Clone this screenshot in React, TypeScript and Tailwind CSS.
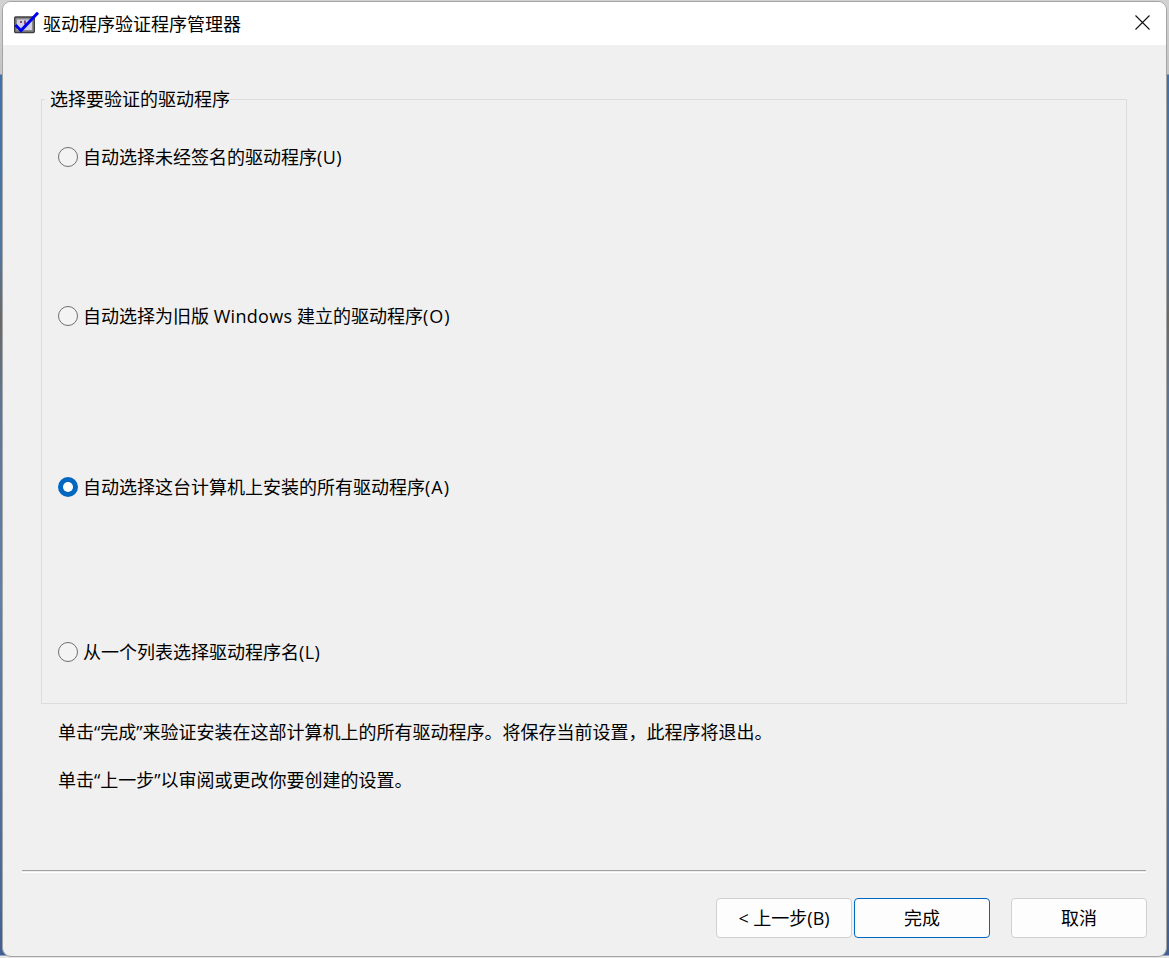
import React from "react";

const font = "font-['Open_Sans','Noto_Sans_CJK_SC',sans-serif]";

function Radio({
  label,
  suffix,
  suffixClass,
  checked,
  className,
}: {
  label: React.ReactNode;
  suffix: string;
  suffixClass?: string;
  checked?: boolean;
  className?: string;
}) {
  return (
    <div className={`flex items-center h-[24px] ${className ?? ""}`}>
      {checked ? (
        <span className="w-[20px] h-[20px] rounded-full bg-[#0067c0] flex items-center justify-center shrink-0">
          <span className="w-[10px] h-[10px] rounded-full bg-white" />
        </span>
      ) : (
        <span className="w-[20px] h-[20px] rounded-full border border-[#6e6e6e] bg-[#f3f3f3] shrink-0" />
      )}
      <span className="ml-[5px] text-[18px] leading-[24px] text-black whitespace-nowrap">
        {label}
        <span className={suffixClass ?? "tracking-[0.4px]"}>{suffix}</span>
      </span>
    </div>
  );
}

function Btn({ label, primary, className }: { label: string; primary?: boolean; className?: string }) {
  return (
    <button
      className={`w-[136px] h-[40px] rounded-[4px] bg-[#fdfdfd] border text-[18px] leading-[24px] text-black ${
        primary ? "border-[#0067c0]" : "border-[#d0d0d0]"
      } ${className ?? ""}`}
    >
      {label}
    </button>
  );
}

function AppIcon() {
  return (
    <svg width="25" height="22" viewBox="0 0 25 22" className="shrink-0 mb-[2px]">
      <rect x="0.7" y="5" width="19.6" height="15.5" rx="1" fill="#8a8a8a" stroke="#3f3f3f" strokeWidth="1.4" />
      <rect x="3" y="7.5" width="15" height="10.5" fill="#cfcfe6" />
      <path d="M6 9h2v2H6zM10 8.5h2v4h-2zM13 10h2v2h-2z" fill="#8a4a6a" />
      <path d="M1.5 13 L7 18.5 L24 0.7" fill="none" stroke="#0000f0" strokeWidth="3" />
    </svg>
  );
}

function CloseIcon() {
  return (
    <svg width="15" height="15" viewBox="0 0 15 15" className="shrink-0 mb-[3px]">
      <path d="M0.5 0.5 L14.5 14.5 M14.5 0.5 L0.5 14.5" stroke="#111" strokeWidth="1.1" fill="none" />
    </svg>
  );
}

export default function App() {
  return (
    <div
      className={`w-[1169px] h-[958px] overflow-hidden pt-[1px] pl-[2px] pr-[2px] pb-[1px] bg-[linear-gradient(180deg,#d2d2d2_0px,#c4c4c4_74px,#3f72ad_75px,#4f77a3_250px,#6b6a66_320px,#5d7696_400px,#5f80a8_600px,#46689a_900px,#3f5f95_955px,#e6e6e6_956px)] ${font}`}
      lang="zh-CN"
    >
      <div className="w-full h-full rounded-[9px] overflow-hidden bg-[#f0f0f0] border border-[#a4a4a4] flex flex-col">
        <div className="h-[43px] bg-white flex items-center shrink-0 pl-[11px] pr-[16px]">
          <AppIcon />
          <span className="ml-[4px] text-[18px] leading-[24px] text-black">驱动程序验证程序管理器</span>
          <span className="ml-auto flex">
            <CloseIcon />
          </span>
        </div>

        <div className="relative ml-[38px] mr-[39px] mt-[54px] h-[605px] border border-[#dcdcdc] shrink-0 pl-[16px] pt-[45px]">
          <span className="absolute left-[3px] top-[-13px] bg-[#f0f0f0] pl-[5px] pr-0 text-[18px] leading-[24px] text-black whitespace-nowrap">
            选择要验证的驱动程序
          </span>
          <Radio label="自动选择未经签名的驱动程序" suffix="(U)" />
          <Radio
            label={
              <>
                自动选择为旧版 <span className="tracking-[0.3px]">Windows</span> 建立的驱动程序
              </>
            }
            suffix="(O)"
            suffixClass="tracking-[1px]"
            className="mt-[135px]"
          />
          <Radio
            label="自动选择这台计算机上安装的所有驱动程序"
            suffix="(A)"
            suffixClass="tracking-[1px]"
            checked
            className="mt-[147px]"
          />
          <Radio label="从一个列表选择驱动程序名" suffix="(L)" className="mt-[141px]" />
        </div>

        <p className="ml-[55px] mt-[16px] text-[18px] leading-[24px] text-black whitespace-nowrap">
          单击“完成”来验证安装在这部计算机上的所有驱动程序。将保存当前设置，此程序将退出。
        </p>
        <p className="ml-[55px] mt-[24px] text-[18px] leading-[24px] text-black whitespace-nowrap">
          单击“上一步”以审阅或更改你要创建的设置。
        </p>

        <div className="ml-[19px] mr-[20px] mt-[78px] border-t border-b border-t-[#a0a0a0] border-b-white h-[3px] shrink-0" />

        <div className="flex mt-[25px] pl-[713px]">
          <Btn label="< 上一步(B)" />
          <Btn label="完成" primary className="ml-[2px]" />
          <Btn label="取消" className="ml-[21px]" />
        </div>
      </div>
    </div>
  );
}
